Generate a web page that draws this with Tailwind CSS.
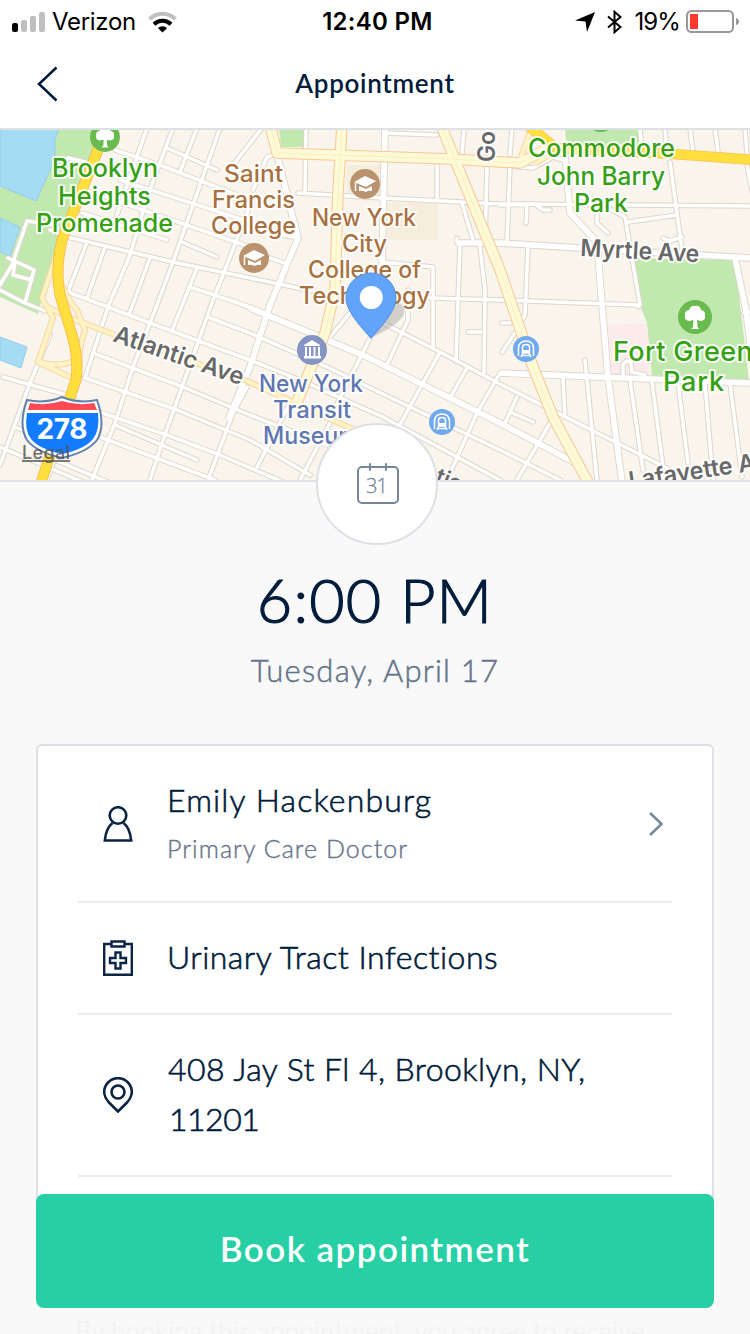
<!DOCTYPE html>
<html lang="en">
<head>
<meta charset="utf-8">
<title>Appointment</title>
<script src="https://cdn.jsdelivr.net/npm/@tailwindcss/browser@4"></script>
</head>
<body class="bg-[#f9f9f9]">
<main class="relative flex h-[1334px] w-[750px] flex-col overflow-hidden bg-[#f9f9f9] font-['Lato','Open_Sans',sans-serif] text-[#001c3b]">

  <!-- status bar -->
  <div class="grid h-10 shrink-0 grid-cols-3 items-center bg-white pt-0.5 pr-[11px] pl-3 font-['Inter',sans-serif] text-[24px] leading-10 text-black">
    <div class="flex items-center">
      <svg class="h-5 w-[33px]" viewBox="0 0 33 20"><rect y="11" width="6" height="9" rx="2"/><g fill="#bfbfbf"><rect x="9" y="8" width="6" height="12" rx="2"/><rect x="18" y="4" width="6" height="16" rx="2"/><rect x="27" y="0" width="6" height="20" rx="2"/></g></svg>
      <span class="ml-[7px] whitespace-nowrap tracking-[-0.3px]">Verizon</span>
      <svg class="ml-3 h-[21px] w-[29px]" viewBox="0 0 29 21" fill="none"><path d="M1.500 7.200A18.500 18.500 0 0 1 27.500 7.200" stroke="#bfbfbf" stroke-width="4"/><path d="M6 12.200A12.500 12.500 0 0 1 23 12.200" stroke="#000" stroke-width="4"/><path d="M14.500 20.500L9.800 16A7 7 0 0 1 19.200 16Z" fill="#000"/></svg>
    </div>
    <div class="pl-1 text-center font-semibold whitespace-nowrap"><span class="tracking-[0.3px]">12:40 PM</span></div>
    <div class="flex items-center justify-end">
      <svg class="h-5 w-5" viewBox="0 0 20 20"><path d="M20 0L12 20L10.500 9.500L0 8.500Z"/></svg>
      <svg class="ml-3 h-6 w-[15px]" viewBox="0 0 15 24" fill="none" stroke="#000" stroke-width="2"><path d="M1 6.500L13.500 17L7.500 22.200V1.800L13.500 7L1 17.500"/></svg>
      <span class="ml-3 whitespace-nowrap tracking-[-0.9px]">19%</span>
      <svg class="ml-1.5 h-6 w-[53px]" viewBox="0 0 53 24"><rect x="1" y="1" width="46" height="21" rx="4.500" fill="none" stroke="#999" stroke-width="2"/><rect x="4" y="4" width="8" height="15" fill="#ff3b30"/><path d="M50 8Q53 9 53 11.500Q53 14 50 15Z" fill="#999"/></svg>
    </div>
  </div>

  <!-- title bar -->
  <header class="grid h-[90px] shrink-0 grid-cols-[1fr_auto_1fr] items-center border-b-2 border-[#dde1e6] bg-white">
    <svg class="ml-9 h-9 w-6" viewBox="0 0 24 36" fill="none" stroke="#001c3b" stroke-width="2.500"><path d="M20.500 1.500L3 18L20.500 34.500"/></svg>
    <h1 class="pb-[3px] text-[26px] leading-[44px] font-semibold tracking-[0.700px]">Appointment</h1>
    <span></span>
  </header>

  <!-- map -->
  <section class="h-[352px] shrink-0 border-b-2 border-[#dde1e6]">
    <svg class="block h-[350px] w-[750px]" viewBox="0 130 750 350" font-family="Inter, sans-serif">
      <defs>
        <g id="minor" fill="none" stroke-linejoin="round" stroke-linecap="round">
          <path d="M147 128L122 200L112 230M173 128L148 195L130 255L108 307L85 378M197 128L180 172M220 128L193 205L173 262L157 305L133 367L115 423L92 480M262 128L233 165M250 205L223 275L213 300L182 387L162 443L150 480M247 387L233 413L208 480M50 335L30 383L0 465M76 400L47 480M108 440L92 480"/>
          <path d="M115 150L160 165L250 200M167 148L217 170M120 180L250 222M85 190L250 247M82 213L167 240M50 230L67 237L173 262L250 278L317 292L345 302M182 242L217 257M87 242L68 292M105 247L87 298M150 258L130 312M197 268L173 328M68 292L150 323L250 360M190 287L250 307"/>
          <path d="M210 318L250 333L327 367L410 407L500 450L560 480M230 300L250 308M93 353L183 387L250 415L340 450M85 378L177 410L250 440L310 475M102 413L167 435L220 455L290 485M115 425L197 460M100 437L215 480M3 377L67 395M0 447L83 482M55 460L110 483M15 427L40 437"/>
          <path d="M250 360L300 380L383 417L457 457L500 480M306 128L305 193M298 193L383 198L500 204L750 206M275 154L267 157L253 190M464 128L462 155M437 165L437 200M487 168L485 243M385 133L437 135M462 203L473 240M457 243V238M460 243L456 361M433 267V347M382 262L433 267M430 298L500 300M480 247L485 290L484 372M270 258L287 264M283 235L298 238"/>
          <path d="M440 352L397 430M467 368L450 398M500 373L477 413L447 480M408 290V320L387 365M350 313L330 337M468 332H481M330 423L300 480M290 403L257 467M383 323L440 352L500 384L667 468M370 338L335 408"/>
          <path d="M510 165L507 242M512 128L510 155M500 165L533 168L553 157L563 160M500 205L535 204L543 210H550M527 205L526 223M597 213V223L608 233M612 210L625 217L640 305M628 222L677 215M670 162L682 250M663 238L670 241L682 237M747 165L756 210M528 248L525 315L520 323M502 323H510M517 330L502 352M500 300L638 305V307M640 128L642 152M665 128L667 152M690 128L693 152M715 128L718 152M745 128L747 154"/>
          <path d="M585 360L597 480M563 378L565 417M630 380L643 470M652 382L663 467M678 383L688 463M705 383L713 480M730 383L742 477M517 397L505 423M510 412L533 422M550 423L517 480M623 375V365Q627 358 631 363L632 372L645 375M750 312L744 313"/>
          <path d="M68 158L85 162M27 221L55 225M27 221L12 265L0 285M8 258L34 270L25 303L0 290M15 262L13 275L32 280M25 303L45 311"/>
        </g>
        <g id="major" fill="none" stroke-linejoin="round">
          <path d="M385 128L382 265M277 155L298 238L270 305L250 367L228 420M250 308L363 355L450 398L500 423L585 468M565 155L570 213L597 242L602 305L608 377L622 482M457 243L500 243L580 248L750 258M500 373L750 383M735 258L746 310L752 360"/>
        </g>
        <g id="amber" fill="none" stroke-linejoin="round">
          <path d="M270 125L277 153L450 159L520 163L545 150"/><path d="M342 125L338 192L335 290L325 333L297 402"/><path d="M441 125L457 165L500 270L533 367L553 417L590 486"/>
        </g>
        <g id="ramp" fill="none" stroke-linejoin="round">
          <path d="M62 238L42 298L53 318L38 362L72 378M40 362Q60 368 76 360M62 285Q68 300 77 310L85 330Q78 350 80 365M45 306L70 318L110 333L245 380L350 428L380 440M530 132L520 160M560 148L535 164"/>
        </g>
        <g id="tree" fill="#fff"><circle r="17" fill="#69bb50"/><path d="M-2 10L-1.500 3L-6 4Q-11 3 -10 -1Q-11 -6 -6 -7Q-4 -12 0 -11Q5 -12 6 -7Q11 -6 10 -1Q11 3 6 4L2 3L2.500 10L4 12H-4Z"/></g>
        <g id="college"><circle r="15" fill="#ba936e"/><path d="M-11 -2L0 -8L11 -3L1 3Z M-6 2L1 5L7 2V7Q4 6 1 8Q-3 6 -6 7Z" fill="#fff"/><path d="M-9.500 -1V7" stroke="#fff" stroke-width="1.500"/></g>
        <g id="train" fill="none" stroke="#fff"><circle r="13" fill="#70a9ee" stroke="none"/><path d="M-7.500 7V-1Q-7 -8 0 -8Q7 -8 7.500 -1V7" stroke-width="1.500"/><path d="M-3.500 -2Q-3.500 -4.500 0 -4.500Q3.500 -4.500 3.500 -2V4H-3.500ZM-3 4L-5 8M3 4L5 8M-4 6.500H4" stroke-width="1.500"/><path d="M-3.500 2.500H3.500" stroke-width="3"/></g>
      </defs>
      <rect y="128" width="750" height="354" fill="#f9f5ed"/>
      <path d="M0 128H96L98 150L60 240L42 298L38 314L0 297Z" fill="#c1e8af"/>
      <path d="M0 128H59L55 140V160L36 201L0 186ZM0 218L20 227L10 256L0 252ZM0 337L27 347L21 368L0 360Z" fill="#a5dcf4" stroke="#93cdec"/>
      <path d="M279 128H304V147H281ZM565 128H640L642 152L567 148ZM634 258L735 260L749 381L652 377L647 323L640 305Z" fill="#c1e8af"/>
      <path d="M347 165h37v32h-37zM383 203h55v37h-55z" fill="#f6eddd"/>
      <path d="M608 325L647 323L650 377L612 375Z" fill="#fbeceb"/>
      <use href="#minor" stroke="#ddd6cb" stroke-width="5.500"/><use href="#major" stroke="#ddd6cb" stroke-width="7.500"/>
      <use href="#minor" stroke="#fff" stroke-width="3.500"/><use href="#major" stroke="#fff" stroke-width="5.700"/>
      <use href="#ramp" stroke="#fbcf9b" stroke-width="6"/><use href="#amber" stroke="#fac791" stroke-width="11.500"/>
      <use href="#ramp" stroke="#fdf3c4" stroke-width="4.200"/><use href="#amber" stroke="#fefad8" stroke-width="9.500"/><use href="#amber" stroke="#fbf0bd" stroke-width="1"/>
      <g fill="none" stroke-linejoin="round"><path d="M98 125V150L80 195L62 240Q55 270 60 295L72 335Q79 360 76 380L55 440L40 486" stroke="#fbb24c" stroke-width="11"/><path d="M98 125V150L80 195L62 240Q55 270 60 295L72 335Q79 360 76 380L55 440L40 486" stroke="#ffdf3d" stroke-width="9.500"/>
      <path d="M526 124L556 148L673 154L755 160" stroke="#fbc75c" stroke-width="10.500"/><path d="M526 124L556 148L673 154L755 160" stroke="#ffdf3d" stroke-width="8.500"/></g>

      <use href="#tree" transform="translate(105 137) scale(.88)"/><use href="#tree" transform="translate(695 317)"/><use href="#tree" transform="translate(601 115)"/>
      <use href="#college" x="365" y="184"/><use href="#college" x="254" y="258"/>
      <use href="#train" x="526" y="349"/><use href="#train" x="442" y="422"/>
      <circle cx="312" cy="350" r="15" fill="#8594c3"/><path d="M312 340L320 345V346H304V345ZM305 347h2v9h-2zM309 347h2v9h-2zM313.500 347h2v9h-2zM318 347h2v9h-2zM304 356h17v2.500h-17z" fill="#fff"/>

      <g stroke="#fff" stroke-opacity=".85" stroke-width="4" stroke-linejoin="round" paint-order="stroke" font-weight="500">
        <g fill="#35a014" font-size="25">
          <text x="52" y="177" textLength="106" lengthAdjust="spacingAndGlyphs">Brooklyn</text><text x="58" y="204.500" textLength="93" lengthAdjust="spacingAndGlyphs">Heights</text><text x="36" y="232" textLength="137" lengthAdjust="spacingAndGlyphs">Promenade</text>
          <text x="528" y="157" textLength="147" lengthAdjust="spacingAndGlyphs">Commodore</text><text x="537" y="184.500" textLength="128" lengthAdjust="spacingAndGlyphs">John Barry</text><text x="574" y="212" textLength="54" lengthAdjust="spacingAndGlyphs">Park</text>
          <text x="613" y="360.500" font-size="27" textLength="156">Fort Greene</text><text x="663" y="390.500" font-size="27" textLength="61">Park</text>
        </g>
        <g fill="#a87140" font-size="24">
          <text x="224" y="182" textLength="59" lengthAdjust="spacingAndGlyphs">Saint</text><text x="212" y="208" textLength="83" lengthAdjust="spacingAndGlyphs">Francis</text><text x="211" y="234" textLength="85" lengthAdjust="spacingAndGlyphs">College</text>
          <text x="312" y="226" textLength="104" lengthAdjust="spacingAndGlyphs">New York</text><text x="342" y="252" textLength="45" lengthAdjust="spacingAndGlyphs">City</text><text x="308" y="278" textLength="113" lengthAdjust="spacingAndGlyphs">College of</text><text x="299" y="304" textLength="131" lengthAdjust="spacingAndGlyphs">Technology</text>
        </g>
        <g fill="#5f77b1" font-size="24">
          <text x="259" y="391.500" textLength="104" lengthAdjust="spacingAndGlyphs">New York</text><text x="273" y="417.500" textLength="78" lengthAdjust="spacingAndGlyphs">Transit</text><text x="263" y="444" textLength="96" lengthAdjust="spacingAndGlyphs">Museum</text>
        </g>
        <g fill="#696969" font-size="24" font-weight="600">
          <text transform="translate(112 341) rotate(19)" textLength="136" lengthAdjust="spacingAndGlyphs">Atlantic Ave</text>
          <text transform="translate(580 256) rotate(3)" textLength="119" lengthAdjust="spacingAndGlyphs">Myrtle Ave</text>
          <text transform="translate(630 489) rotate(-8.500)" textLength="153" lengthAdjust="spacingAndGlyphs">Lafayette Ave</text>
          <text transform="translate(495 162) rotate(-90)" textLength="31" lengthAdjust="spacingAndGlyphs">Go</text>
          <text transform="translate(434 482) rotate(22)" font-size="22">tic Ave</text>
        </g>
      </g>

      <path d="M27 400Q45 404 62 397Q79 404 97 400Q106 425 97 440Q88 452 62 458Q36 452 27 440Q18 425 27 400Z" fill="#fff" stroke="#6480ac" stroke-width="2"/>
      <path d="M30 403Q46 406 62 401Q78 406 94 403L97 410H28Z" fill="#ff4a55"/><path d="M27 413H98Q100 430 93 439Q85 449 62 454Q39 449 31 439Q24 430 27 413Z" fill="#127bff"/>
      <text x="36.500" y="438.500" font-size="28" font-weight="700" fill="#fff" textLength="51">278</text>
      <text x="22" y="459" font-size="18" font-weight="500" fill="#555" fill-opacity=".85" textLength="48">Legal</text><path d="M22 461H70" stroke="#555" stroke-width="1.500"/>

      <path d="M371 338Q378 318 396 302Q408 305 403 316Q396 326 371 338Z" fill="#777" fill-opacity=".3"/>
      <path d="M371 338.500C367 333 346 313 346 298A25 25 0 0 1 396 298C396 313 375 333 371 338.500Z" fill="#62a3fc" stroke="#4e8fe3" stroke-width="1"/><circle cx="371.300" cy="297.500" r="11.500" fill="#fff"/>
    </svg>
  </section>

  <!-- calendar badge on the map's lower edge -->
  <div class="absolute top-[423px] left-[316px] flex h-[122px] w-[122px] items-center justify-center rounded-full border-2 border-[#dde1e6] bg-white pl-0.5">
    <svg class="h-[42px] w-[42px]" viewBox="0 0 42 42" fill="none" stroke="#76869a" stroke-width="2"><rect x="1" y="4" width="40" height="36" rx="4"/><path d="M13 1V7M29 1V7" stroke-linecap="round"/><text x="9" y="29.500" font-family="Open Sans, sans-serif" font-size="20" font-weight="300" fill="#76869a" stroke="#76869a" stroke-width=".3" textLength="22">31</text></svg>
  </div>

  <!-- date and time -->
  <section class="flex h-[262px] shrink-0 flex-col items-center pt-20 font-light">
    <p class="text-[61px] leading-[76px] tracking-[1.200px] whitespace-nowrap [-webkit-text-stroke:1.2px]">6:00 PM</p>
    <p class="pt-[9px] text-[31px] leading-[46px] tracking-[1.250px] whitespace-nowrap text-[#64748a] [-webkit-text-stroke:0.5px]">Tuesday, April 17</p>
  </section>

  <!-- details -->
  <section class="mx-9 h-[480px] shrink-0 rounded-md border-2 border-[#dde1e6] bg-white px-10 font-light">
    <div class="flex h-[157px] items-center border-b-2 border-[#ecedef] pr-2 pl-[25px]">
      <svg class="h-9 w-[30px]" viewBox="0 0 30 36" fill="none" stroke="#0a2444" stroke-width="2.600"><circle cx="15" cy="9.500" r="8.300"/><path d="M9.500 17Q3 22 1.800 34.500H28.200Q27 22 20.500 17"/></svg>
      <div class="flex-1 pb-0.5 pl-[34px] whitespace-nowrap">
        <p class="text-[32px] leading-[50px] tracking-[1.150px] [-webkit-text-stroke:0.6px]">Emily Hackenburg</p>
        <p class="text-[25px] leading-[46px] tracking-[1.050px] text-[#68768b] [-webkit-text-stroke:0.4px]">Primary Care Doctor</p>
      </div>
      <svg class="h-6 w-4" viewBox="0 0 16 24" fill="none" stroke="#76869a" stroke-width="2.500"><path d="M2 1L13.500 12L2 23"/></svg>
    </div>
    <div class="flex h-28 items-center border-b-2 border-[#ecedef] pl-[25px]">
      <svg class="h-9 w-[30px]" viewBox="0 0 30 36" fill="none" stroke="#0a2444" stroke-width="2.400"><path d="M8 4H1.200V34.800H28.800V4H22"/><path d="M8.500 1.500H21.500V6.500H8.500Z"/><path d="M12.500 12.500H17.500V18H23V23H17.500V28.500H12.500V23H7V18H12.500Z"/></svg>
      <p class="pb-[3px] pl-[34px] text-[32px] leading-[50px] tracking-[0.500px] whitespace-nowrap [-webkit-text-stroke:0.6px]">Urinary Tract Infections</p>
    </div>
    <div class="flex h-[162px] items-center border-b-2 border-[#ecedef] pl-[25px]">
      <svg class="h-9 w-[30px]" viewBox="0 0 30 36" fill="none" stroke="#0a2444" stroke-width="2.600"><path d="M15 34.500L5.500 25Q1.200 20 1.200 15A13.800 13.800 0 0 1 28.800 15Q28.800 20 24.500 25Z"/><circle cx="15" cy="15" r="6.500"/></svg>
      <p class="pb-[3px] pl-[35px] text-[32px] leading-[50px] tracking-[0.450px] whitespace-nowrap [-webkit-text-stroke:0.6px]">408 Jay St Fl 4, Brooklyn, NY,<br><span class="pl-px tracking-[-0.500px]">11201</span></p>
    </div>
  </section>

  <p class="pt-[92px] pl-[75px] text-[26px] leading-[30px] whitespace-nowrap text-[#f3f3f3]">By booking this appointment, you agree to receive</p>

  <!-- sticky action -->
  <div class="absolute inset-x-0 bottom-0 px-9 pt-4 pb-[26px]">
    <button class="flex h-[114px] w-full items-center justify-center rounded-lg bg-[#26d0a4] pb-[5px] text-[35px] font-semibold tracking-[1.450px] text-white">Book appointment</button>
  </div>
</main>
</body>
</html>
